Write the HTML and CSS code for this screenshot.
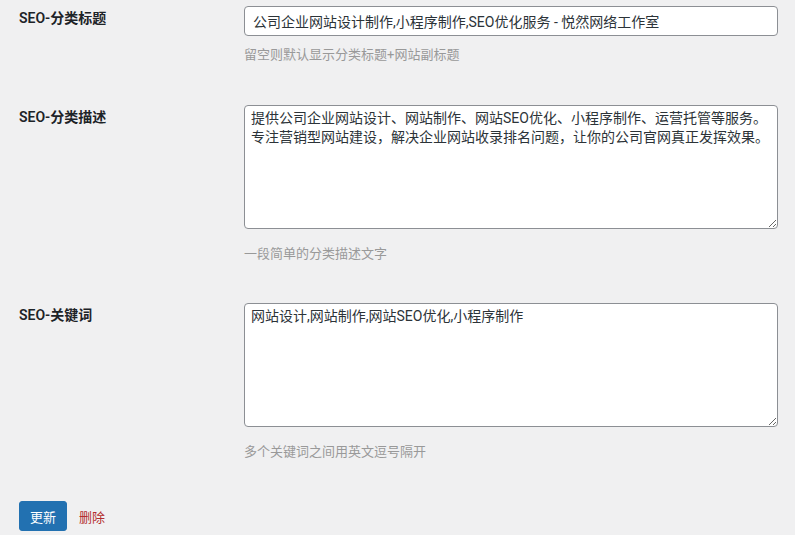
FILE: index.html
```html
<!DOCTYPE html>
<html lang="zh-CN">
<head>
    <meta charset="UTF-8">
    <meta name="viewport" content="width=device-width, initial-scale=1.0">
    <title>编辑分类</title>
    <link rel="stylesheet" href="styles.css">
</head>
<body>
    <form class="term-form">
        <div class="form-row">
            <label class="form-label" for="seo-title">SEO-分类标题</label>
            <div class="form-field">
                <input class="text-input" id="seo-title" type="text" value="公司企业网站设计制作,小程序制作,SEO优化服务 - 悦然网络工作室">
                <p class="description">留空则默认显示分类标题+网站副标题</p>
            </div>
        </div>

        <div class="form-row">
            <label class="form-label" for="seo-desc">SEO-分类描述</label>
            <div class="form-field">
                <textarea class="text-area" id="seo-desc">提供公司企业网站设计、网站制作、网站SEO优化、小程序制作、运营托管等服务。
专注营销型网站建设，解决企业网站收录排名问题，让你的公司官网真正发挥效果。</textarea>
                <p class="description description-area">一段简单的分类描述文字</p>
            </div>
        </div>

        <div class="form-row">
            <label class="form-label" for="seo-keys">SEO-关键词</label>
            <div class="form-field">
                <textarea class="text-area" id="seo-keys">网站设计,网站制作,网站SEO优化,小程序制作</textarea>
                <p class="description description-area">多个关键词之间用英文逗号隔开</p>
            </div>
        </div>

        <div class="form-actions">
            <button class="button-primary" type="button">更新</button>
            <a class="delete-link" href="#">删除</a>
        </div>
    </form>
</body>
</html>
```

FILE: styles.css
```css
* {
    padding: 0;
    margin: 0;
    box-sizing: border-box;
}

body {
    background-color: #f0f0f1;
    color: #3c434a;
    font-family: "Segoe UI", Roboto, "Noto Sans CJK SC", sans-serif;
    font-size: 13px;
}

.term-form {
    display: flex;
    flex-direction: column;
    gap: 39px;
    padding: 6px 17px 0 19px;
}

.form-row {
    display: flex;
}

.form-row:first-child {
    margin-bottom: 1px;
}

.form-label {
    width: 225px;
    flex-shrink: 0;
    padding-top: 2px;
    font-size: 14px;
    font-weight: 600;
    line-height: 20px;
    color: #1d2327;
}

.form-field {
    flex: 1;
}

.text-input,
.text-area {
    display: block;
    width: 100%;
    border: 1px solid #8c8f94;
    border-radius: 4px;
    background-color: #ffffff;
    color: #2c3338;
    font-family: "Segoe UI", Roboto, "Noto Sans CJK SC", sans-serif;
    font-size: 14px;
}

.text-input {
    height: 30px;
    padding: 0 8px;
    line-height: 28px;
}

.text-area {
    height: 124px;
    padding: 3px 6px;
    line-height: 19px;
}

.description {
    margin-top: 9px;
    line-height: 20px;
    color: #999999;
}

.description-area {
    margin-top: 15px;
}

.form-actions {
    display: flex;
    align-items: center;
    gap: 12px;
}

.button-primary {
    height: 30px;
    padding: 0 10px;
    border: 1px solid #2271b1;
    border-radius: 3px;
    background-color: #2271b1;
    color: #ffffff;
    font-family: inherit;
    font-size: 13px;
    cursor: pointer;
}

.delete-link {
    color: #b32d2e;
    text-decoration: none;
    font-size: 13px;
}
```
